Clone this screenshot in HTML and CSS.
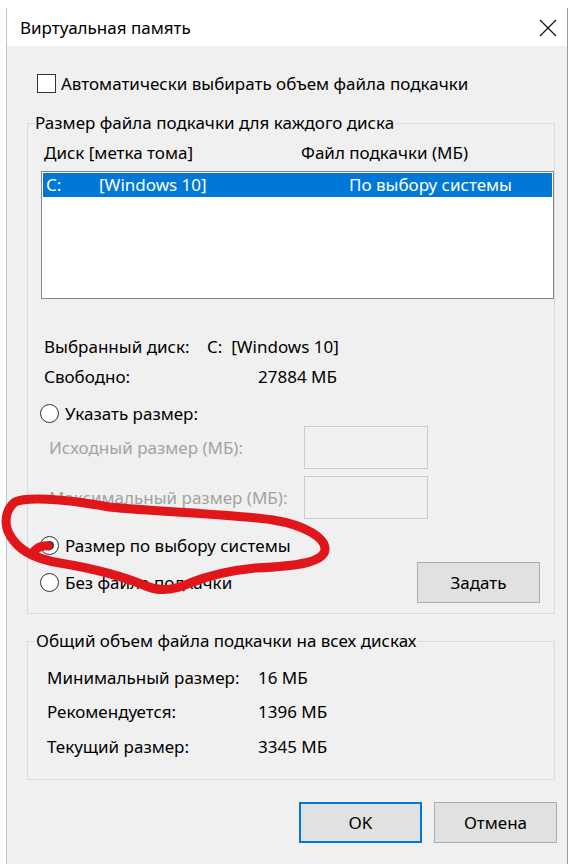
FILE: index.html
```html
<!DOCTYPE html>
<html lang="ru">
<head>
    <meta charset="UTF-8">
    <title>Виртуальная память</title>
    <link rel="stylesheet" href="styles.css">
</head>
<body>

    <div class="dialog">
        <div class="titlebar">
            <span>Виртуальная память</span>
            <svg class="close" width="18" height="18" viewBox="0 0 18 18">
                <path d="M1 1 L17 17 M17 1 L1 17" stroke="#111" stroke-width="1.2" fill="none"/>
            </svg>
        </div>

        <div class="content">
            <div class="check-row">
                <span class="checkbox"></span>
                <span>Автоматически выбирать объем файла подкачки</span>
            </div>

            <fieldset class="group group-disks">
                <legend>Размер файла подкачки для каждого диска</legend>

                <div class="list-head">
                    <span class="col-disk">Диск [метка тома]</span>
                    <span>Файл подкачки (МБ)</span>
                </div>

                <div class="listbox">
                    <div class="list-row selected">
                        <span class="col-letter">C:</span>
                        <span class="col-label">[Windows 10]</span>
                        <span>По выбору системы</span>
                    </div>
                </div>

                <div class="info-row first">
                    <span class="info-label">Выбранный диск:</span>
                    <span>C:&nbsp; [Windows 10]</span>
                </div>
                <div class="info-row">
                    <span class="info-label free">Свободно:</span>
                    <span>27884 МБ</span>
                </div>

                <div class="radio-row custom">
                    <span class="radio"></span>
                    <span>Указать размер:</span>
                </div>

                <div class="size-row">
                    <span class="size-label">Исходный размер (МБ):</span>
                    <span class="size-input"></span>
                </div>
                <div class="size-row second">
                    <span class="size-label">Максимальный размер (МБ):</span>
                    <span class="size-input"></span>
                </div>

                <div class="radio-row system">
                    <span class="radio checked"></span>
                    <span>Размер по выбору системы</span>
                </div>

                <div class="last-row">
                    <div class="radio-row">
                        <span class="radio"></span>
                        <span>Без файла подкачки</span>
                    </div>
                    <button class="btn">Задать</button>
                </div>
            </fieldset>

            <fieldset class="group group-total">
                <legend>Общий объем файла подкачки на всех дисках</legend>
                <div class="total-row">
                    <span class="total-label">Минимальный размер:</span>
                    <span>16 МБ</span>
                </div>
                <div class="total-row">
                    <span class="total-label">Рекомендуется:</span>
                    <span>1396 МБ</span>
                </div>
                <div class="total-row">
                    <span class="total-label">Текущий размер:</span>
                    <span>3345 МБ</span>
                </div>
            </fieldset>

            <div class="buttons">
                <button class="btn default">OK</button>
                <button class="btn">Отмена</button>
            </div>
        </div>

        <!-- hand-drawn red loop on top of the screenshot -->
        <svg class="scribble" width="340" height="110" viewBox="0 490 340 110">
            <path d="M11 537 C3 525 5 510 15 502 C25 497 60 498 109 507 C160 512 230 514 273 520 C305 525 326 538 325 550 C323 562 300 566 255 568 C225 571 205 577 190 583 C175 590 160 592 146 586 C120 575 90 568 60 563 C30 558 18 548 11 537 M32 554 C36 548 42 545 48 546"
                  stroke="#e0161b" stroke-width="9" fill="none" stroke-linecap="round" stroke-linejoin="round"/>
        </svg>
    </div>

</body>
</html>
```

FILE: styles.css
```css
body {
    margin: 0;
    padding: 8px 0 0 6px;
    background: #ffffff;
    font-family: "Noto Sans", "Open Sans", sans-serif;
    font-size: 17px;
    color: #000;
    overflow: hidden;
}

.dialog {
    position: relative;
    width: 560px;
    height: 870px;
    background: #f0f0f0;
    border-left: 1px solid #c4c4c4;
    border-right: 1px solid #9a9a9a;
}

.titlebar {
    height: 38px;
    background: #fff;
    display: flex;
    align-items: center;
    justify-content: space-between;
    padding: 0 10px 0 13px;
}

.close {
    margin-top: 2px;
}

.content {
    padding: 0 12px 0 20px;
}

.check-row {
    display: flex;
    align-items: center;
    gap: 5px;
    height: 22px;
    margin-top: 26px;
    padding-left: 10px;
}

.checkbox {
    width: 17px;
    height: 17px;
    border: 1px solid #333;
    background: #fff;
}

.group {
    margin: 18px 0 0 0;
    padding: 0 0 10px 13px;
    border: 1px solid #dcdcdc;
    min-width: 0;
}

.group legend {
    margin-left: -7px;
    padding: 0 1px;
    line-height: 22px;
}

.list-head {
    display: flex;
    height: 22px;
    line-height: 22px;
    margin-top: 8px;
    padding-left: 3px;
}

.col-disk {
    width: 257px;
}

.listbox {
    height: 124px;
    margin-top: 7px;
    background: #fff;
    border: 1px solid #828790;
    padding: 1px;
}

.list-row {
    display: flex;
    height: 24px;
    line-height: 24px;
    padding-left: 3px;
}

.list-row.selected {
    background: #0078d7;
    color: #fff;
}

.col-letter {
    width: 53px;
}

.col-label {
    width: 250px;
}

.info-row {
    display: flex;
    height: 22px;
    line-height: 22px;
    margin-top: 8px;
    padding-left: 3px;
}

.info-row.first {
    margin-top: 37px;
}

.info-label {
    width: 163px;
}

.info-label.free {
    width: 214px;
}

.radio-row {
    display: flex;
    align-items: center;
    gap: 6px;
    height: 22px;
    margin-left: -1px;
}

.radio-row.custom {
    margin-top: 14px;
}

.radio-row.system {
    margin-top: 15px;
}

.radio {
    width: 17px;
    height: 17px;
    border: 1px solid #333;
    border-radius: 50%;
    background: #fff;
    display: flex;
    align-items: center;
    justify-content: center;
}

.radio.checked::after {
    content: "";
    width: 9px;
    height: 9px;
    border-radius: 50%;
    background: #333;
}

.size-row {
    display: flex;
    align-items: center;
    height: 43px;
    margin-top: 2px;
    padding-left: 8px;
    color: #a3a3a3;
}

.size-row.second {
    margin-top: 7px;
}

.size-label {
    width: 255px;
}

.size-input {
    width: 122px;
    height: 41px;
    border: 1px solid #cccccc;
    background: #f0f0f0;
}

.last-row {
    display: flex;
    align-items: center;
    justify-content: space-between;
    height: 41px;
    margin-top: 6px;
    padding-right: 14px;
}

.btn {
    width: 123px;
    height: 41px;
    font-family: inherit;
    font-size: 17px;
    color: #000;
    background: #e1e1e1;
    border: 1px solid #adadad;
    padding: 0;
}

.btn.default {
    border: 2px solid #0078d7;
}

.scribble {
    position: absolute;
    left: -7px;
    top: 482px;
}

.group-total {
    margin-top: 16px;
    padding-bottom: 21px;
}

.group-total legend {
    margin-left: -6px;
}

.total-row {
    display: flex;
    height: 22px;
    line-height: 22px;
    margin-top: 12px;
    padding-left: 6px;
}

.total-row:first-of-type {
    margin-top: 15px;
}

.total-row:last-child {
    margin-top: 13px;
}

.total-label {
    width: 211px;
}

.buttons {
    display: flex;
    justify-content: flex-end;
    gap: 12px;
    margin: 22px -2px 0 0;
}
```
